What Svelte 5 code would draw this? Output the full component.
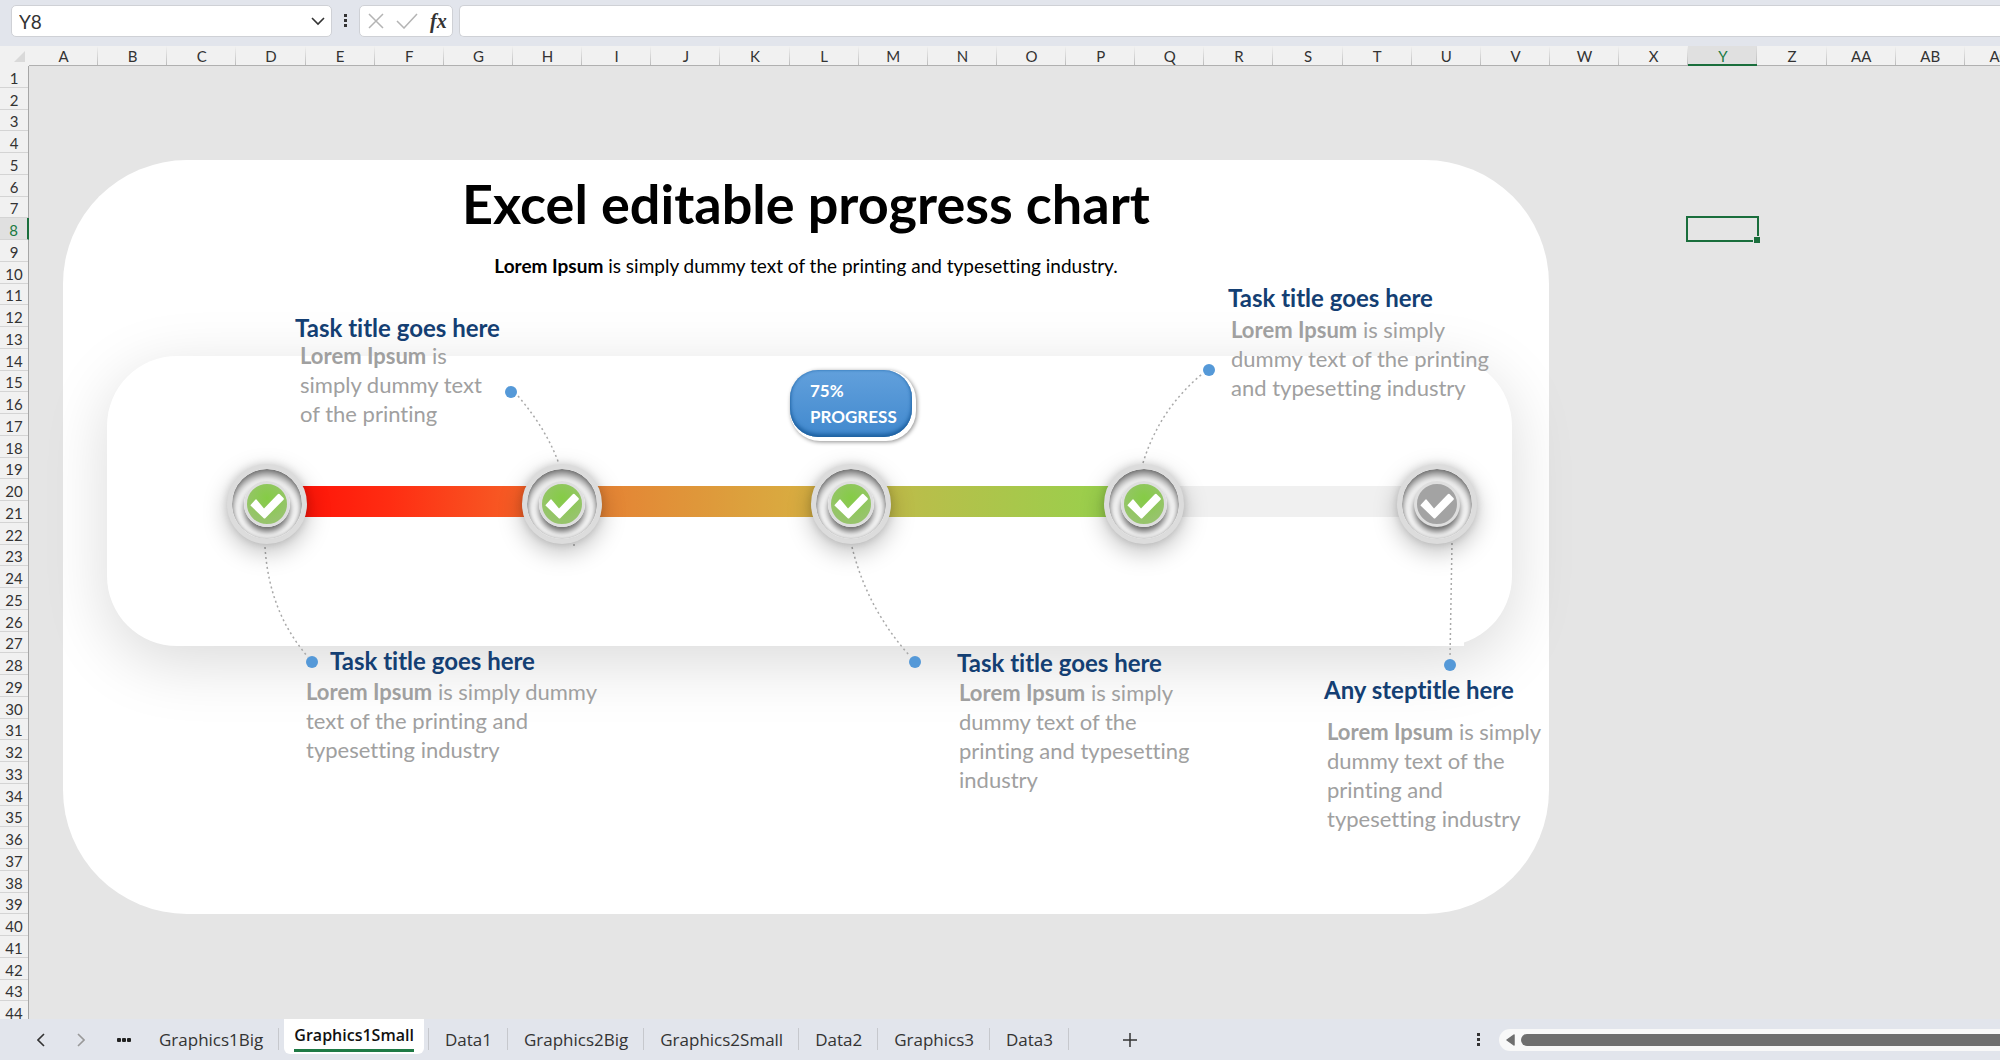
<script>
  const columns = [...'ABCDEFGHIJKLMNOPQRSTUVWXYZ', 'AA', 'AB', 'AC']
  const rows = Array.from({ length: 44 }, (_, i) => i + 1)
  const selected = { column: 'Y', row: 8 }

  let active_tab = $state('Graphics1Small')
  const tabs = [
    'Graphics1Big',
    'Graphics1Small',
    'Data1',
    'Graphics2Big',
    'Graphics2Small',
    'Data2',
    'Graphics3',
    'Data3',
  ]

  // chart coordinates start at the top left corner of the card
  const milestones = [
    { x: 204, done: true },
    { x: 499, done: true },
    { x: 788, done: true },
    { x: 1081, done: true },
    { x: 1374, done: false },
  ]

  const connectors = [
    'M202 387 Q206 452 245 497',
    'M455 236 Q484 270 496 304',
    'M511 384 v5',
    'M789 387 Q804 448 846 495',
    'M1080 303 Q1096 250 1139 214',
    'M1389 383 L1387 498',
  ]

  const dots = [
    { x: 249, y: 502 },
    { x: 448, y: 232 },
    { x: 852, y: 502 },
    { x: 1146, y: 210 },
    { x: 1387, y: 505 },
  ]

  const titles = [
    { x: 232, y: 154, text: 'Task title goes here' },
    { x: 1165, y: 124, text: 'Task title goes here' },
    { x: 267, y: 487, text: 'Task title goes here' },
    { x: 894, y: 489, text: 'Task title goes here' },
    { x: 1261, y: 516, text: 'Any steptitle here' },
  ]

  const notes = [
    { x: 237, y: 181, lines: [' is', 'simply dummy text', 'of the printing'] },
    { x: 1168, y: 155, lines: [' is simply', 'dummy text of the printing', 'and typesetting industry'] },
    { x: 243, y: 517, lines: [' is simply dummy', 'text of the printing and', 'typesetting industry'] },
    { x: 896, y: 518, lines: [' is simply', 'dummy text of the', 'printing and typesetting', 'industry'] },
    { x: 1264, y: 557, lines: [' is simply', 'dummy text of the', 'printing and', 'typesetting industry'] },
  ]
</script>

<div class="workbook">
  <header class="formula-bar">
    <div class="name-box">
      <input type="text" value="Y8" aria-label="Name Box" />
      <button type="button" aria-label="Open name list">
        <svg width="14" height="9" viewBox="0 0 14 9"><path d="M1 1l6 6 6-6" fill="none" stroke="#333" stroke-width="1.6" /></svg>
      </button>
    </div>
    <svg class="grip" width="4" height="14" viewBox="0 0 4 14" fill="#333">
      <rect width="3" height="3" /><rect y="5" width="3" height="3" /><rect y="10" width="3" height="3" />
    </svg>
    <div class="actions">
      <button type="button" aria-label="Cancel">
        <svg width="16" height="16" viewBox="0 0 16 16"><path d="M1 1l14 14M15 1L1 15" stroke="#b4b4b4" stroke-width="1.5" /></svg>
      </button>
      <button type="button" aria-label="Enter">
        <svg width="22" height="16" viewBox="0 0 22 16"><path d="M1 8l7 7L21 1" fill="none" stroke="#b4b4b4" stroke-width="1.5" /></svg>
      </button>
      <button type="button" class="fx" aria-label="Insert function">fx</button>
    </div>
    <input class="formula" type="text" aria-label="Formula" />
  </header>

  <div class="column-row">
    <div class="corner">
      <svg width="11" height="11" viewBox="0 0 11 11"><path d="M11 0v11H0z" fill="#d9d9d9" /></svg>
    </div>
    <div class="columns">
      {#each columns as column}
        <div class="column" class:selected={column === selected.column}>{column}</div>
      {/each}
    </div>
  </div>

  <main class="sheet">
    <div class="rows">
      {#each rows as row}
        <div class="row" class:selected={row === selected.row}>{row}</div>
      {/each}
    </div>

    <div class="canvas">
      <section class="chart">
        <div class="panel"></div>
        <h1>Excel editable progress chart</h1>
        <p class="subtitle"><b>Lorem Ipsum</b> is simply dummy text of the printing and typesetting industry.</p>

        <div class="track"><div class="fill"></div></div>

        <svg class="connectors" width="1486" height="754" viewBox="0 0 1486 754">
          {#each connectors as d}
            <path {d} />
          {/each}
          {#each dots as dot}
            <circle cx={dot.x} cy={dot.y} r="6" />
          {/each}
        </svg>

        {#each milestones as milestone}
          <div class="milestone" class:done={milestone.done} style="left: {milestone.x}px">
            <div class="knob">
              <svg width="40" height="40" viewBox="-20 -20 40 40">
                <path d="M-16 0.5L-11.5-4.5Q-11-5-10.5-4.5L-3 4.5 10.5-9.5Q12-11 13-9.5L16.5-6Q17.3-5 16.3-4L-1.5 14Q-2.5 15-3.5 14L-16 2Q-17 1.5-16 0.5z" fill="#fff" />
              </svg>
            </div>
          </div>
        {/each}

        <div class="badge">
          <span>75%</span>
          <span>PROGRESS</span>
        </div>

        {#each titles as title}
          <h2 style="left: {title.x}px; top: {title.y}px">{title.text}</h2>
        {/each}
        {#each notes as note}
          <p class="note" style="left: {note.x}px; top: {note.y}px">
            {#each note.lines as line, i}
              {#if i === 0}<b>Lorem Ipsum</b>{:else}<br />{/if}{line}
            {/each}
          </p>
        {/each}
      </section>

      <div class="cells">
        <div class="selection"></div>
      </div>
    </div>
  </main>

  <footer class="tab-bar">
    <div class="tab-nav">
      <button type="button" aria-label="Previous sheet">
        <svg width="8" height="14" viewBox="0 0 8 14"><path d="M7 1L1 7l6 6" fill="none" stroke="#333" stroke-width="1.6" /></svg>
      </button>
      <button type="button" aria-label="Next sheet">
        <svg width="8" height="14" viewBox="0 0 8 14"><path d="M1 1l6 6-6 6" fill="none" stroke="#999" stroke-width="1.6" /></svg>
      </button>
      <button type="button" aria-label="More sheets">
        <svg width="14" height="4" viewBox="0 0 14 4" fill="#222"><rect width="4" height="4" rx="1" /><rect x="5" width="4" height="4" rx="1" /><rect x="10" width="4" height="4" rx="1" /></svg>
      </button>
    </div>
    <nav class="tabs">
      {#each tabs as tab}
        <button type="button" class="tab" class:active={tab === active_tab} onclick={() => (active_tab = tab)}>
          <span>{tab}</span>
        </button>
      {/each}
    </nav>
    <button type="button" class="add" aria-label="New sheet">
      <svg width="14" height="14" viewBox="0 0 14 14"><path d="M7 0v14M0 7h14" stroke="#333" stroke-width="1.5" /></svg>
    </button>
    <div class="scroll">
      <svg width="4" height="14" viewBox="0 0 4 14" fill="#333">
        <rect width="3" height="3" /><rect y="5" width="3" height="3" /><rect y="10" width="3" height="3" />
      </svg>
      <div class="scrollbar">
        <button type="button" aria-label="Scroll left">
          <svg width="9" height="12" viewBox="0 0 9 12"><path d="M8 1v10L1 6z" fill="#6e6e6e" stroke="#6e6e6e" stroke-width="1.5" stroke-linejoin="round" /></svg>
        </button>
        <div class="thumb"></div>
      </div>
    </div>
  </footer>
</div>

<style>
  .workbook {
    display: flex;
    flex-direction: column;
    height: 100vh;
    overflow: hidden;
    background: #e5e5e5;
    color: #333;
    font-family: 'Open Sans', 'Noto Sans', sans-serif;
  }

  button {
    display: flex;
    align-items: center;
    justify-content: center;
    padding: 0;
    border: none;
    background: none;
    color: inherit;
    font: inherit;
    cursor: pointer;
  }

  input {
    min-width: 0;
    padding: 0;
    border: none;
    background: none;
    color: inherit;
    font: inherit;
    outline: none;
  }

  .formula-bar {
    display: flex;
    flex: none;
    box-sizing: border-box;
    height: 46px;
    padding: 5px 0 9px 11px;
    background: #e2e5ec;
  }

  .name-box,
  .actions,
  .formula {
    box-sizing: border-box;
    border: 1px solid #cfd1d6;
    border-radius: 5px;
    background: #fff;
  }

  .name-box {
    display: flex;
    align-items: center;
    width: 321px;
    padding: 0 6px 0 7px;
    font-size: 19px;
  }

  .name-box input {
    flex: 1;
    font-family: Lato, sans-serif;
  }

  .grip {
    align-self: center;
    margin: 0 11px 0 12px;
  }

  .actions {
    display: flex;
    align-items: center;
    gap: 12px;
    width: 94px;
    padding: 0 8px;
  }

  .actions .fx {
    font: italic bold 20px 'Liberation Serif', serif;
  }

  .formula {
    flex: 1;
    margin-left: 6px;
    border-right: none;
    border-radius: 5px 0 0 5px;
  }

  .column-row {
    display: flex;
    flex: none;
    height: 20px;
    overflow: hidden;
    background: #f1f1f1;
    font-family: Lato, sans-serif;
    font-size: 15px;
  }

  .corner {
    display: flex;
    flex: none;
    justify-content: flex-end;
    align-items: center;
    box-sizing: border-box;
    width: 29px;
    padding-right: 4px;
  }

  /* the last column runs past the window edge */
  .columns,
  .cells {
    display: grid;
    grid-template-columns: repeat(29, 1fr);
    flex: 1;
    margin-right: -34px;
  }

  .column {
    box-sizing: border-box;
    height: 20px;
    border-bottom: 1px solid #b0b0b0;
    background: linear-gradient(transparent, #bdbdbd) right / 1px 100% no-repeat;
    line-height: 20px;
    text-align: center;
  }

  .column.selected {
    border-bottom: 2px solid #1a6e3c;
    background-color: #e0e0e0;
    color: #1a7a43;
  }

  .sheet {
    display: flex;
    flex: 1;
    min-height: 0;
    overflow: hidden;
  }

  .rows {
    display: grid;
    grid-template-rows: repeat(44, 1fr);
    flex: none;
    box-sizing: border-box;
    width: 29px;
    height: calc(100% + 4px);
    border-right: 1px solid #a6a6a6;
    background: #f1f1f1;
    font-family: Lato, sans-serif;
    font-size: 15px;
  }

  .row {
    display: flex;
    align-items: center;
    justify-content: center;
    min-height: 0;
    box-sizing: border-box;
    padding-top: 3px;
    border-bottom: 1px solid #d4d4d4;
    line-height: 16px;
  }

  .row.selected {
    margin-right: -1px;
    border-right: 2px solid #1a6e3c;
    background: #e0e0e0;
    color: #1a7a43;
  }

  .canvas {
    position: relative;
    flex: 1;
    min-width: 0;
  }

  .cells {
    grid-template-rows: repeat(44, 1fr);
    height: calc(100% + 4px);
  }

  .selection {
    position: relative;
    grid-area: 8 / 25;
    margin: -2px;
    border: 2px solid #1a6e3c;
  }

  .selection::after {
    content: '';
    position: absolute;
    right: -4px;
    bottom: -4px;
    width: 6px;
    height: 6px;
    border: 1px solid #e5e5e5;
    background: #1a6e3c;
  }

  .chart {
    position: absolute;
    left: 34px;
    top: 94px;
    box-sizing: border-box;
    width: 1486px;
    height: 754px;
    border-radius: 124px;
    background: #fff;
    font-family: Lato, sans-serif;
    font-variant-ligatures: none;
  }

  h1 {
    position: relative;
    margin: 0;
    padding-top: 14px;
    color: #000;
    font-size: 54px;
    line-height: 60px;
    text-align: center;
  }

  .subtitle {
    position: relative;
    margin: 18px 0 0;
    color: #000;
    font-size: 19px;
    line-height: 28px;
    text-align: center;
  }

  .panel {
    position: absolute;
    left: 44px;
    right: 37px;
    top: 196px;
    height: 290px;
    border-radius: 70px;
    background: #fff;
    box-shadow: 0 16px 64px rgba(0, 0, 0, 0.15);
  }

  .panel::after {
    content: '';
    position: absolute;
    right: 48px;
    bottom: 0;
    width: 24px;
    height: 4px;
    background: #fff;
  }

  .track {
    position: absolute;
    left: 204px;
    top: 326px;
    width: 1170px;
    height: 31px;
    background: #f0f0f0;
  }

  .fill {
    width: 75%;
    height: 100%;
    background: linear-gradient(90deg, #ff1408 4%, #ff2d12 14%, #f65f26 29%, #e58334 38%, #d9ab40 60%, #b9be4a 74%, #98d04c 96%);
  }

  .connectors {
    position: absolute;
    left: 0;
    top: 0;
  }

  .connectors path {
    fill: none;
    stroke: #a9a9a9;
    stroke-width: 1.5;
    stroke-dasharray: 2 3;
  }

  .connectors circle {
    fill: #5599d8;
  }

  .milestone {
    position: absolute;
    top: 304px;
    display: flex;
    align-items: center;
    justify-content: center;
    box-sizing: border-box;
    width: 80px;
    height: 80px;
    margin-left: -40px;
    border: 5px solid #dcdcdc;
    border-radius: 50%;
    background: #fff;
    box-shadow:
      0 8px 24px rgba(0, 0, 0, 0.25),
      0 0 8px rgba(0, 0, 0, 0.15),
      inset 0 6px 8px rgba(0, 0, 0, 0.5),
      inset 0 0 4px rgba(0, 0, 0, 0.3);
  }

  .knob {
    width: 40px;
    height: 40px;
    border: 3px solid #dedede;
    border-radius: 50%;
    background: #a3a3a3;
    box-shadow: 0 5px 7px rgba(0, 0, 0, 0.6);
  }

  .done .knob {
    background: radial-gradient(circle at 50% 35%, #85cc45, #97c46c 70%);
  }

  .badge {
    position: absolute;
    left: 727px;
    top: 210px;
    display: flex;
    flex-direction: column;
    box-sizing: border-box;
    width: 122px;
    height: 67px;
    padding: 8px 0 0 20px;
    border-radius: 28px;
    background: linear-gradient(#62a0dc, #4189ce);
    box-shadow:
      inset 0 -3px 4px #1c5f9f,
      inset 0 0 3px #2f74b5,
      2px 2px 0 2px #fff,
      3px 3px 4px 2px rgba(0, 0, 0, 0.45);
    color: #fff;
    font-size: 17px;
    font-weight: bold;
    line-height: 26px;
  }

  h2 {
    position: absolute;
    margin: 0;
    color: #143f73;
    font-size: 24px;
    line-height: 28px;
    white-space: nowrap;
  }

  .note {
    position: absolute;
    margin: 0;
    color: #a0a0a0;
    font-size: 22px;
    line-height: 29px;
    white-space: nowrap;
  }

  .tab-bar {
    display: flex;
    flex: none;
    height: 41px;
    background: #e2e5ec;
    font-size: 17px;
  }

  .tab-nav {
    display: flex;
    align-items: center;
    gap: 32px;
    padding: 0 12px 0 37px;
  }

  .tabs {
    display: flex;
  }

  .tab {
    position: relative;
    height: 35px;
    padding: 5px 16px 0;
  }

  .tab::after {
    content: '';
    position: absolute;
    right: 0;
    top: 9px;
    width: 1px;
    height: 22px;
    background: #c6c8cd;
  }

  .tab.active {
    margin: 0 5px;
    padding: 0 10px;
    border-radius: 0 0 6px 6px;
    background: #fff;
    color: #111;
    font-size: 16px;
    font-weight: 600;
  }

  .tab.active::after {
    right: -5px;
  }

  .tab.active span {
    border-bottom: 3px solid #1f7a45;
    line-height: 28px;
  }

  .add {
    margin-left: 54px;
  }

  .scroll {
    display: flex;
    align-items: center;
    gap: 18px;
    width: 523px;
    margin-left: auto;
  }

  .scrollbar {
    display: flex;
    align-items: center;
    gap: 6px;
    flex: 1;
    height: 22px;
    padding-left: 7px;
    border-radius: 11px 0 0 11px;
    background: #f8f8f8;
  }

  .thumb {
    flex: 1;
    height: 12px;
    border-radius: 6px 0 0 6px;
    background: #6e6e6e;
  }
</style>
